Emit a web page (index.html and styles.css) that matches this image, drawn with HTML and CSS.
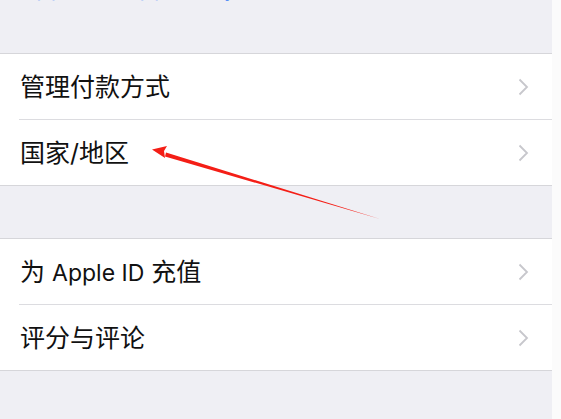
FILE: index.html
```html
<!DOCTYPE html>
<html lang="zh">
<head>
<meta charset="utf-8">
<link rel="stylesheet" href="styles.css">
</head>
<body>
<div class="screen">
  <div class="top-gap">
    <div class="cut-link">Apple ID Apple Pay</div>
  </div>
  <div class="group">
    <div class="row"><span class="label">管理付款方式</span><span class="chev"><svg width="11" height="18" viewBox="0 0 11 18"><path d="M1.5 1.5 L9 9 L1.5 16.5" fill="none" stroke="#c7c7cc" stroke-width="1.8"/></svg></span></div>
    <div class="sep"></div>
    <div class="row"><span class="label">国家/地区</span><span class="chev"><svg width="11" height="18" viewBox="0 0 11 18"><path d="M1.5 1.5 L9 9 L1.5 16.5" fill="none" stroke="#c7c7cc" stroke-width="1.8"/></svg></span></div>
  </div>
  <div class="gap"></div>
  <div class="group">
    <div class="row"><span class="label">为 <span class="latin">Apple ID</span> 充值</span><span class="chev"><svg width="11" height="18" viewBox="0 0 11 18"><path d="M1.5 1.5 L9 9 L1.5 16.5" fill="none" stroke="#c7c7cc" stroke-width="1.8"/></svg></span></div>
    <div class="sep"></div>
    <div class="row"><span class="label">评分与评论</span><span class="chev"><svg width="11" height="18" viewBox="0 0 11 18"><path d="M1.5 1.5 L9 9 L1.5 16.5" fill="none" stroke="#c7c7cc" stroke-width="1.8"/></svg></span></div>
  </div>
  <div class="bottom-gap"></div>
  <svg class="arrow" width="561" height="419" viewBox="0 0 561 419">
    <path d="M380 219 L166 152.5 L165 156.5 Z" fill="#f41e16"/>
    <path d="M152 149.5 L167 146 L164 151 L165 158 Z" fill="#f41e16"/>
  </svg>
</div>
</body>
</html>
```

FILE: styles.css
```css
html, body {
  margin: 0;
  padding: 0;
  background: #fbfbfb;
}
.screen {
  position: relative;
  width: 552px;
  height: 419px;
  background: #efeff4;
  font-family: "Inter", "Noto Sans CJK SC", sans-serif;
  overflow: hidden;
}
.top-gap {
  height: 53px;
  overflow: hidden;
}
.cut-link {
  margin-top: -25px;
  padding-left: 20px;
  font-size: 22px;
  line-height: 26px;
  color: #3478f6;
  letter-spacing: 1px;
}
.group {
  background: #fff;
  border-top: 1px solid #d6d6da;
  border-bottom: 1px solid #d6d6da;
}
.row {
  height: 65px;
  box-sizing: border-box;
  display: flex;
  align-items: center;
  justify-content: space-between;
  padding: 0 23px 3px 20px;
}
.label {
  font-size: 25px;
  color: #111;
}
.latin {
  font-size: 23px;
}
.chev {
  display: flex;
  align-items: center;
  padding-top: 3px;
}
.sep {
  height: 1px;
  margin-left: 19px;
  background: #dcdce0;
}
.gap {
  height: 52px;
}
.bottom-gap {
  flex: 1;
}
.arrow {
  position: absolute;
  left: 0;
  top: 0;
  pointer-events: none;
}
```
